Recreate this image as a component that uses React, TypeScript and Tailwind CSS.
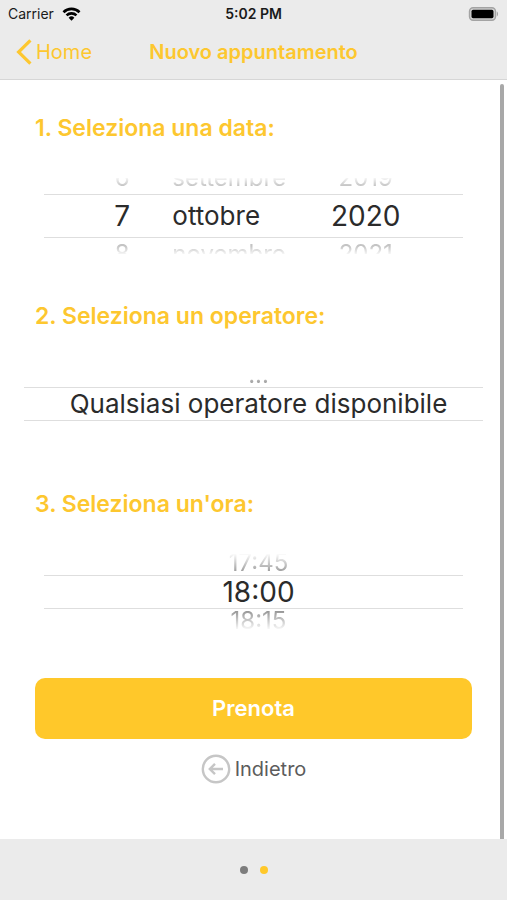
import { useState } from 'react';
import clsx from 'clsx';

const days = Array.from({ length: 31 }, (_, i) => String(i + 1));
const months = [
  'gennaio', 'febbraio', 'marzo', 'aprile', 'maggio', 'giugno',
  'luglio', 'agosto', 'settembre', 'ottobre', 'novembre', 'dicembre',
];
const years = ['2018', '2019', '2020', '2021', '2022'];
const operators = ['...', 'Qualsiasi operatore disponibile'];
const times = ['17:30', '17:45', '18:00', '18:15', '18:30'];

interface WheelProps {
  label: string;
  items: string[];
  initial: number;
  tall?: boolean;
  words?: boolean;
  className?: string;
}

// One column of a picker: the chosen value between two rules, its neighbours faded
function Wheel({ label, items, initial, tall = false, words = false, className }: WheelProps) {
  const [index, setIndex] = useState(initial);
  const align = clsx('flex w-full items-center', className);
  const side = clsx(
    'block w-full shrink-0 text-2xl leading-6 whitespace-nowrap',
    tall ? 'h-8 text-[#c4c4c4]' : 'h-6 text-[#999]',
  );

  const step = (by: number) => {
    const next = index + by;
    if (next >= 0 && next < items.length) setIndex(next);
  };

  return (
    <div role="group" aria-label={label} className="flex h-19 flex-col justify-center overflow-hidden">
      <button
        type="button"
        onClick={() => step(-1)}
        className={clsx(side, tall ? 'mask-[linear-gradient(to_top,black_25%,transparent_55%)]' : 'mask-[linear-gradient(to_top,black_10%,transparent_90%)]')}
      >
        <span className={clsx(align, 'h-full')}>{items[index - 1] ?? ''}</span>
      </button>
      <output
        className={clsx(
          align,
          'shrink-0 border-y border-[#dedede] leading-8 whitespace-nowrap text-[#2b2b2b]',
          words ? 'text-[26px]' : 'text-[28px]',
          tall ? 'h-11' : 'h-[34px]',
        )}
      >
        {items[index]}
      </output>
      <button
        type="button"
        onClick={() => step(1)}
        className={clsx(side, tall ? 'mask-[linear-gradient(to_bottom,black_25%,transparent_55%)]' : 'mask-[linear-gradient(to_bottom,black_10%,transparent_90%)]')}
      >
        <span className={clsx(align, 'h-full')}>{items[index + 1] ?? ''}</span>
      </button>
    </div>
  );
}

function Step({ title, children }: { title: string; children: React.ReactNode }) {
  return (
    <section>
      <h2 className="px-[35px] text-[23px] leading-8 font-semibold text-[#fdc72f]">{title}</h2>
      <div className="flex h-36 flex-col justify-center">{children}</div>
    </section>
  );
}

function StatusBar() {
  return (
    <div className="grid h-7 grid-cols-3 items-center px-2 text-sm text-[#1a1a1a]">
      <div className="flex items-center gap-2">
        <span>Carrier</span>
        <svg viewBox="0 0 20 15" className="h-[14px] w-[19px]" fill="none" stroke="#000" strokeWidth="2.8">
          <path d="M1.4 5.6a12.2 12.2 0 0 1 17.2 0" />
          <path d="M4.7 9a7.5 7.5 0 0 1 10.6 0" />
          <path d="M10 14.6 6.9 11.4a4.4 4.4 0 0 1 6.2 0z" fill="#000" stroke="none" />
        </svg>
      </div>
      <span className="text-center font-semibold">5:02 PM</span>
      <svg viewBox="0 0 31 14" className="h-[14px] w-[31px] justify-self-end">
        <rect x="1.5" y="0.8" width="26" height="12.4" rx="3.6" fill="#d4d4d4" stroke="#a3a3a3" strokeWidth="1.4" />
        <rect x="3.5" y="2.8" width="22" height="8.4" rx="1.6" fill="#000" />
        <path d="M28.8 4.6c1.6.6 1.6 4.2 0 4.8z" fill="#a3a3a3" />
      </svg>
    </div>
  );
}

export default function App() {
  return (
    <div className="flex min-h-screen flex-col bg-white font-['Inter',sans-serif]">
      <header className="border-b border-[#d6d6d6] bg-[#ebebeb]">
        <StatusBar />
        <nav className="mb-[3px] grid h-12 grid-cols-[1fr_auto_1fr] items-center px-4 text-xl text-[#fdc72f]">
          <a href="#home" className="flex items-center gap-1">
            <svg viewBox="0 0 16 26" className="h-[26px] w-4" fill="none" stroke="currentColor" strokeWidth="3.2">
              <path d="M14.4 1.4 2.6 13l11.8 11.6" />
            </svg>
            Home
          </a>
          <h1 className="font-semibold">Nuovo appuntamento</h1>
        </nav>
      </header>

      <main className="relative flex-1 pt-8">
        <form onSubmit={(e) => e.preventDefault()}>
          <div className="flex flex-col gap-3">
            <Step title="1. Seleziona una data:">
              <div className="mx-11 grid grid-cols-[128fr_112fr_178fr]">
                <Wheel label="Giorno" items={days} initial={6} tall className="justify-center pl-7" />
                <Wheel label="Mese" items={months} initial={9} tall words />
                <Wheel label="Anno" items={years} initial={2} tall className="justify-center pr-4" />
              </div>
            </Step>
            <Step title="2. Seleziona un operatore:">
              <div className="mx-6">
                <Wheel label="Operatore" items={operators} initial={1} words className="justify-center pl-2.5" />
              </div>
            </Step>
            <Step title="3. Seleziona un'ora:">
              <div className="mx-11">
                <Wheel label="Ora" items={times} initial={2} className="justify-center pl-2.5" />
              </div>
            </Step>
          </div>

          <div className="mt-3.5 flex flex-col items-center px-[35px]">
            <button type="submit" className="h-[61px] w-full rounded-[10px] bg-[#ffc82a] text-[22px] font-semibold text-white">
              Prenota
            </button>
            <button type="button" className="mt-[15px] flex items-center gap-1 text-xl text-[#5c5c5c]">
              <svg viewBox="0 0 30 30" className="size-[30px]" fill="none" stroke="#c6c6c6" strokeWidth="2.4">
                <circle cx="15" cy="15" r="13.2" />
                <path d="M22 15H9.4M14 9.8 8.8 15l5.2 5.2" />
              </svg>
              Indietro
            </button>
          </div>
        </form>
        <div className="absolute top-1 right-[3px] bottom-0 w-1 rounded-t-full bg-[#a8a8a8]" />
      </main>

      <footer className="flex h-[61px] items-center justify-center gap-3 bg-[#ebebeb]">
        <span className="size-2 rounded-full bg-[#7c7c7c]" />
        <span className="size-2 rounded-full bg-[#ffc82a]" />
      </footer>
    </div>
  );
}
